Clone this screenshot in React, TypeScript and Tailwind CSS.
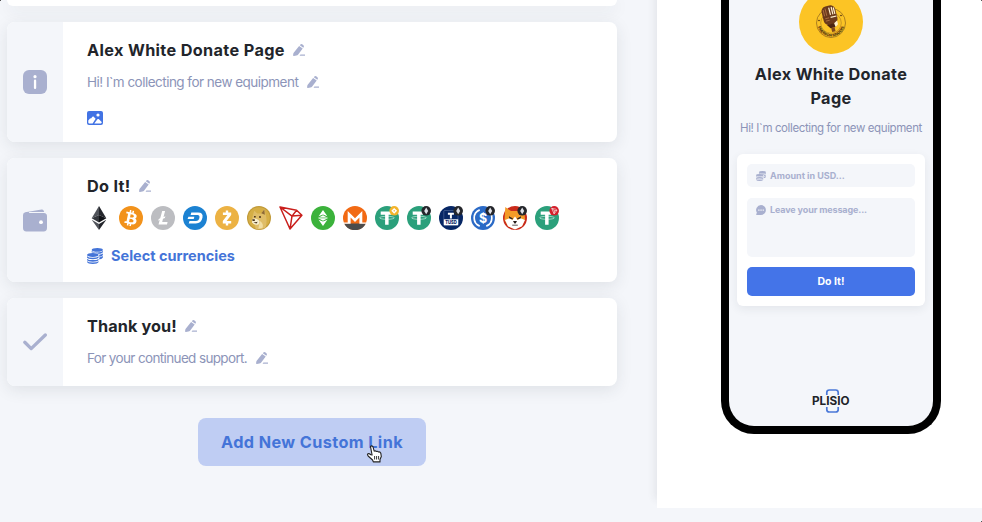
import type { ReactNode } from "react";
import { FaBtc } from "react-icons/fa";

const heading = "font-['Inter'] font-bold text-[16.25px] leading-6 text-[#22252b]";
const muted = "font-['Inter'] text-[#8c94b8]";

function Pencil() {
    return (
        <svg className="w-3 h-3 shrink-0" viewBox="0 0 12 12" fill="#a9b0cf">
            <path d="M6.1 2 9.7 4.6 5.2 10.6Q4.5 11.4 3.4 11.6L1 12Q0 12.1 .1 11.1L.4 9.3Q.5 8.8.9 8.4Z" />
            <path d="M6.8 1.2 7.4.6Q8.2-.3 9.2.3L10.4 1.2Q11.2 1.9 10.8 2.9L10.3 3.8Z" />
            <path d="M7.4 10.5h4.6v1.3H6.6Z" />
        </svg>
    );
}

function Coins({ className }: { className: string }) {
    return (
        <svg className={className} viewBox="0 0 16 16" fill="currentColor">
            <ellipse cx="10.3" cy="1.9" rx="5.6" ry="1.9" />
            <path d="M4.7 2.8Q6 4.4 10.3 4.4T15.9 2.8V3.9Q15.5 5.6 11.2 5.8 9 4.3 4.7 4.5Z" />
            <path d="M12.2 6.7Q14.8 6.4 15.9 5.4V6.9Q15.3 8.3 12.3 8.7Z" />
            <path d="M12.3 9.4Q14.8 9.1 15.9 8.1V9.6Q15.3 11 12.3 11.4Z" />
            <ellipse cx="5.8" cy="6.9" rx="5.8" ry="2" />
            <path d="M0 8.2Q1.5 9.7 5.8 9.7T11.6 8.2V9.6Q10.7 11.3 5.8 11.3T0 9.6Z" />
            <path d="M0 10.9Q1.5 12.1 5.8 12.1T11.6 10.9V12.1Q10.7 13.7 5.8 13.7T0 12.1Z" />
            <path d="M0 13.2Q1.5 14.4 5.8 14.4T11.6 13.2V14.1Q10.7 16 5.8 16T0 14.1Z" />
        </svg>
    );
}

function InfoIcon() {
    return (
        <svg className="w-6 h-6" viewBox="0 0 24 24">
            <rect width="24" height="24" rx="6" fill="#a9b0cf" />
            <circle cx="12" cy="6.7" r="1.6" fill="#fff" />
            <rect x="10.9" y="9.6" width="2.3" height="9.4" rx="1.1" fill="#fff" />
        </svg>
    );
}

function WalletIcon() {
    return (
        <svg className="w-6 h-6" viewBox="0 0 24 24" fill="#a9b0cf">
            <path d="M2.2 4.2 18.6 1.4Q20 1.2 20.6 2.6L21.2 4.1H6.4Q5 4.6 6.4 5.1H21Q24 5.4 24 8.2V20Q24 23.4 20.6 23.4H3.4Q0 23.4 0 20V7Q0 4.6 2.2 4.2Z" />
            <circle cx="18" cy="14.2" r="1.9" fill="#fff" />
        </svg>
    );
}

function CheckIcon() {
    return (
        <svg className="w-6 h-6" viewBox="0 0 24 24" fill="none" stroke="#a9b0cf" strokeWidth="3.3" strokeLinecap="round" strokeLinejoin="round">
            <path d="M1.8 12.3 8.2 18.6 22.3 5" />
        </svg>
    );
}

function PictureIcon() {
    return (
        <svg className="w-4 h-3.5" viewBox="0 0 16 14">
            <rect width="16" height="14" rx="2" fill="#4273e4" />
            <circle cx="11" cy="4" r="1.6" fill="#fff" />
            <path d="M1.3 11.6V9.6L3 7.5 4.3 7.3 5.3 5.8 6.5 5.6 8.6 7.8 5.6 12.4H2Q1.3 12.4 1.3 11.6Z" fill="#fff" />
            <path d="M7.3 12.4 10.6 8 11.7 8 14.7 10.9V11.6Q14.6 12.4 13.8 12.4Z" fill="#fff" />
        </svg>
    );
}

function Coin({ color, badge, children }: { color?: string; badge?: string; children: ReactNode }) {
    return (
        <svg className="w-6 h-6" viewBox="0 0 24 24">
            {color && <circle cx="12" cy="12" r="12" fill={color} />}
            {children}
            {badge && <circle cx="19.2" cy="4.8" r="4.8" fill={badge} />}
            {badge === "#24262b" && <path d="M19.2 1.4 21.2 5 19.2 8.2 17.2 5Z" fill="#dfe1e8" />}
            {badge === "#f3b42c" && (
                <path d="M19.2 1.9 22.1 4.8 19.2 7.7 16.3 4.8ZM19.2 3.9 18.3 4.8 19.2 5.7 20.1 4.8Z" fill="#fff" fillRule="evenodd" />
            )}
            {badge === "#d4202c" && <path d="M16.7 2.4 20.6 3.1 22 4.3 19.1 7.8ZM16.7 2.4 19.5 4.7 22 4.3M19.5 4.7 19.1 7.8" fill="none" stroke="#fff" strokeWidth=".6" />}
        </svg>
    );
}

function TetherMark() {
    return (
        <g fill="#fff">
            <path d="M5.7 5.6H17.6V8.8H13.6V18.8H10.1V8.8H5.7Z" />
            <ellipse cx="12" cy="11.8" rx="7.4" ry="1.5" fill="none" stroke="#fff" strokeOpacity=".75" strokeWidth=".7" />
        </g>
    );
}

function CurrencyRow() {
    return (
        <div className="flex gap-2">
            <Coin>
                <path d="M12 0 4.7 12.2 12 9Z" fill="#50535a" />
                <path d="M12 0 19.3 12.2 12 9Z" fill="#24262c" />
                <path d="M4.7 12.2 12 9V16.5Z" fill="#33363c" />
                <path d="M19.3 12.2 12 9V16.5Z" fill="#111317" />
                <path d="M4.7 13.8 12 18V24Z" fill="#50535a" />
                <path d="M19.3 13.8 12 18V24Z" fill="#24262c" />
            </Coin>
            <Coin color="#f2921b">
                <g transform="rotate(12 12 12)">
                    <FaBtc x="4.2" y="4.2" width="15.6" height="15.6" color="#fff" />
                </g>
            </Coin>
            <Coin color="#bcbdc1">
                <path d="M11.2 5H14.1L12.5 11 14.4 10.3 13.9 12 12 12.8 11.2 15.9H16.6L16 18.4H7.5L8.7 14.1 7.2 14.7 7.7 12.9 9.2 12.2Z" fill="#fff" />
            </Coin>
            <Coin color="#1c82d2">
                <path d="M8.3 6.5H15Q20.4 6.5 19.5 11.6 18.4 17.5 12.8 17.5H5.7L6.5 14.9H13Q15.7 14.9 16.4 11.9 16.9 9.1 14.5 9.1H7.6Z" fill="#fff" />
                <path d="M5.4 10.7H11.4L10.7 13H4.6Z" fill="#fff" />
            </Coin>
            <Coin color="#ecb244">
                <path d="M7.9 6.5H10.8V4.6H13.2V6.5H16.2V9L11.6 14.9H16.2V17.5H13.2V19.4H10.8V17.5H7.8V15L12.4 9.1H7.9Z" fill="#fff" />
            </Coin>
            <Coin color="#c19a38">
                <circle cx="12" cy="12" r="10.8" fill="#d5ae45" />
                <path d="M6 9 7.2 4.8 10.3 7.5 14.2 7.4 17.5 2.7 18.7 8.8Q20.5 14 18.6 21.5 14 24.4 8.6 22.7L8 19.6Q4.2 17 4.8 13.4Z" fill="#dfbd68" />
                <path d="M14.3 7.3 17.3 3.6 17.8 8.7Z" fill="#8e6a35" />
                <path d="M5 13.5Q7 11.8 10.5 13.4T11.4 18.4Q6.6 19.4 5.2 16.5Z" fill="#f8efcf" />
                <path d="M5.2 13.2h2.6v1.8H5.6ZM7 10.1h1.7v1.4H7ZM12 10.2h2v1.5h-2ZM6.3 16.6 10.7 15.7 9.5 17.4Z" fill="#4c351c" />
                <path d="M13 15Q17 18 15.5 22L11.3 22.8Z" fill="#f1dda2" />
            </Coin>
            <Coin>
                <path d="M1 1 17.6 4.3 22.9 9.2 11 23ZM1 1 13 10.1 22.9 9.2M13 10.1 17.6 4.3M13 10.1 11 23" fill="none" stroke="#c91f1c" strokeWidth="1.5" strokeLinejoin="round" />
            </Coin>
            <Coin color="#3bb23b">
                <path d="M12 4 16.4 10.2 12 8.6 7.6 10.2ZM12 20 7.6 13.8 12 15.4 16.4 13.8Z" fill="#fff" />
                <path d="M12 9.2 17 11.9 12 14.7 7 11.9Z" fill="#fff" />
                <path d="M8.2 11.9H15.8" stroke="#3bb23b" strokeWidth=".7" />
            </Coin>
            <Coin color="#f26a14">
                <path d="M1.2 17.4A12 12 0 0 0 22.8 17.4Z" fill="#4c4c4c" />
                <path d="M.1 16.5H4.7V5L12 12.3 19.3 5V16.5H23.9L22.8 17.8H16.4V11.5L12 15.9 7.6 11.5V17.8H1.2Z" fill="#fff" />
            </Coin>
            <Coin color="#2ba07b" badge="#f3b42c"><TetherMark /></Coin>
            <Coin color="#2ba07b" badge="#24262b"><TetherMark /></Coin>
            <Coin color="#072765" badge="#24262b">
                <rect x="4.8" y="4.5" width="14.2" height="14.5" rx="1" fill="none" stroke="#aebbd6" strokeOpacity=".6" strokeWidth=".5" />
                <path d="M8.9 6.8H14.9V8.8H12.9V12.4H10.9V8.8H8.9Z" fill="#fff" />
                <rect x="4.8" y="13.3" width="14.4" height="6" fill="#fff" />
                <text x="12" y="18" fontSize="4.6" fontWeight="800" fontFamily="Inter, sans-serif" textLength="11.6" lengthAdjust="spacingAndGlyphs" textAnchor="middle" fill="#072765">TUSD</text>
            </Coin>
            <Coin color="#2b6ac6" badge="#24262b">
                <path d="M8.7 3.9A8.7 8.7 0 0 0 8.7 20.1M15.3 3.9A8.7 8.7 0 0 1 15.3 20.1" fill="none" stroke="#fff" strokeWidth="1.7" />
                <text x="12" y="16.5" fontSize="12.5" fontWeight="700" fontFamily="Inter, sans-serif" textAnchor="middle" fill="#fff">$</text>
            </Coin>
            <Coin color="#c92b1b" badge="#24262b">
                <path d="M2.3 1 8 5.1H15.5L21 3 22 13 19 20 12 23.3 5 20.3 1.5 14Z" fill="#f39b27" />
                <path d="M2 14 6.4 12.2 9.5 14 12 10.5 14.5 14 17.6 12.2 22 14 19 20.3 12 23.4 5 20.3Z" fill="#fff" />
                <path d="M6 10.2 10 12.4 9.4 13.5 6.2 12.2ZM18 10.2 14 12.4 14.6 13.5 17.8 12.2ZM10 15H14L12.6 17.6H11.4ZM9.2 18.7H14.8V19.6H9.2Z" fill="#29201e" />
            </Coin>
            <Coin color="#2ba07b" badge="#d4202c"><TetherMark /></Coin>
        </div>
    );
}

function Card({ icon, className, children }: { icon: ReactNode; className: string; children: ReactNode }) {
    return (
        <section className={`flex w-[610px] shrink-0 overflow-hidden rounded-lg bg-white shadow-[0_4px_16px_rgba(40,45,60,0.1)] ${className}`}>
            <div className="flex w-14 shrink-0 items-center justify-center bg-[#f4f6fa]">{icon}</div>
            <div className="flex flex-col pl-6">{children}</div>
        </section>
    );
}

function Logo() {
    return (
        <svg className="w-10 h-6" viewBox="0 0 40 24">
            <path d="M15.8 6V3.5Q15.8 1 18.3 1H24.7Q27.2 1 27.2 3.5V6M15.8 18V20.5Q15.8 23 18.3 23H24.7Q27.2 23 27.2 20.5V18" fill="none" stroke="#4a78d8" strokeWidth="1.7" />
            <text x="1" y="16" fontSize="11.3" fontWeight="700" fontFamily="Inter, sans-serif" textLength="37.5" lengthAdjust="spacingAndGlyphs" fill="#202329">PLISIO</text>
        </svg>
    );
}

function Avatar() {
    return (
        <svg className="-mt-[10px] h-16 w-16 shrink-0" viewBox="0 0 64 64">
            <circle cx="32" cy="32" r="32" fill="#fcc425" />
            <circle cx="32" cy="33" r="14.5" fill="none" stroke="#8a611c" strokeWidth=".7" />
            <circle cx="32" cy="33" r="10.3" fill="none" stroke="#a87a22" strokeWidth=".6" />
            <path id="ring" d="M18.4 33A13.6 13.6 0 0 0 45.6 33" fill="none" />
            <text fontSize="3.6" fontWeight="800" fontFamily="Inter, sans-serif" fill="#4a2c0d">
                <textPath href="#ring" startOffset="50%" textAnchor="middle">EMERSON SINGERS</textPath>
            </text>
            <circle cx="20" cy="30.5" r=".8" fill="#4a2c0d" />
            <circle cx="42" cy="25.5" r=".8" fill="#4a2c0d" />
            <g transform="rotate(-14 31 25)">
                <rect x="23.5" y="15.5" width="14" height="19" rx="5" fill="#6b3a1c" />
                <path d="M31.5 17.5V25M34 17.5V25M36 18.5V25M31 27.5H37" stroke="#fff1cf" strokeWidth="1.2" />
                <path d="M25.5 18.5V25M27.7 17.5V25M25.5 27.5H29.5M25.5 30H29.5" stroke="#b17445" strokeWidth=".8" />
                <path d="M25.5 34H36L33.5 38H28.3Z" fill="#4b2512" />
                <path d="M29 38H32.5V42H29Z" fill="#80491f" />
                <path d="M33 34 36.5 32V36L33.5 38Z" fill="#fff1cf" />
            </g>
        </svg>
    );
}

function Phone() {
    return (
        <div className="ml-16 flex h-[434px] w-[220px] flex-col items-center rounded-b-[33px] border-x-8 border-b-8 border-black bg-[#f4f6fa]">
            <Avatar />
            <h2 className={`${heading} mt-2 w-full text-center tracking-[0.35px]`}>
                Alex White Donate
                <br />
                Page
            </h2>
            <p className={`${muted} mt-2 text-[11.5px] leading-5 whitespace-nowrap tracking-[-0.39px]`}>Hi! I`m collecting for new equipment</p>
            <div className="mt-4 flex h-[152px] w-[188px] shrink-0 flex-col rounded-md bg-white p-2.5 shadow-[0_3px_10px_rgba(40,45,60,0.08)]">
                <div className="flex h-[23px] items-center gap-1 rounded-[5px] bg-[#f4f6fa] pl-[9px] text-[#a9b0cf]">
                    <Coins className="h-2.5 w-2.5" />
                    <span className="font-['Inter'] text-[9px] leading-[14px] font-bold">Amount in USD...</span>
                </div>
                <div className="mt-[11px] flex h-[59px] items-start gap-1 rounded-[5px] bg-[#f4f6fa] pt-[5px] pl-[9px] text-[#a9b0cf]">
                    <svg className="mt-[1.5px] h-2.5 w-2.5" viewBox="0 0 10 10">
                        <path d="M5 .1A4.9 4.9 0 1 1 5 9.9H.5Q0 9.7.3 9L.9 7.7A4.9 4.9 0 0 1 5 .1Z" fill="currentColor" />
                        <path d="M2.2 4.4h1.3v1.3H2.2ZM4.4 4.4h1.3v1.3H4.4ZM6.6 4.4h1.3v1.3H6.6Z" fill="#f4f6fa" />
                    </svg>
                    <span className="font-['Inter'] text-[9px] leading-[14px] font-bold tracking-[-0.12px]">Leave your message...</span>
                </div>
                <button className="mt-2.5 h-[29px] rounded-[5px] bg-[#4474e8] font-['Inter'] text-[10.5px] font-bold text-white">Do It!</button>
            </div>
            <div className="mt-auto mb-[13px]">
                <Logo />
            </div>
        </div>
    );
}

function HandCursor() {
    return (
        <svg className="absolute top-[27px] left-[168px] h-[18px] w-[18px]" viewBox="0 0 18 18">
            <path d="M4.5 1.6Q5.6.2 6.9 1.6L8.2 6.1Q9.3 5.4 10.3 6.4 11.6 5.8 12.4 7 14.2 6.5 14.8 8.2L15.3 11.5 14 14.5V16.9H7.3L6.6 15 2.1 11Q.9 9.7 1.9 8.7 3.1 8.3 4.9 9.7L6.1 10Z" fill="#fff" stroke="#222" strokeWidth="1.1" strokeLinejoin="round" />
            <path d="M8.6 11V14.5M10.6 11V14.5M12.6 11V14.5" stroke="#222" strokeWidth=".9" />
        </svg>
    );
}

export default function App() {
    return (
        <div className="relative flex h-[522px] w-[982px] overflow-hidden bg-[#f4f6fa]">
            <main className="flex w-[657px] shrink-0 flex-col gap-4 pl-[7px]">
                <div className="h-1.5 w-[610px] shrink-0 rounded-b-lg bg-white shadow-[0_4px_16px_rgba(40,45,60,0.1)]" />
                <Card icon={<InfoIcon />} className="h-[120px]">
                    <div className="mt-4 flex items-center gap-2">
                        <h2 className={`${heading} tracking-[0.35px]`}>Alex White Donate Page</h2>
                        <Pencil />
                    </div>
                    <div className="mt-2 flex items-center gap-[9px]">
                        <p className={`${muted} text-[13.5px] leading-6 tracking-[-0.52px]`}>Hi! I`m collecting for new equipment</p>
                        <Pencil />
                    </div>
                    <div className="mt-[17px]">
                        <PictureIcon />
                    </div>
                </Card>
                <Card icon={<WalletIcon />} className="h-[124px]">
                    <div className="mt-4 flex items-center gap-2">
                        <h2 className={`${heading} tracking-[0.3px]`}>Do It!</h2>
                        <Pencil />
                    </div>
                    <div className="mt-2">
                        <CurrencyRow />
                    </div>
                    <div className="mt-3.5 flex items-center gap-2 text-[#4474d8]">
                        <Coins className="h-4 w-4" />
                        <span className="font-['Inter'] text-[14.5px] leading-6 font-bold">Select currencies</span>
                    </div>
                </Card>
                <Card icon={<CheckIcon />} className="h-[88px]">
                    <div className="mt-4 flex items-center gap-2">
                        <h2 className={`${heading} tracking-[0.1px]`}>Thank you!</h2>
                        <Pencil />
                    </div>
                    <div className="mt-2 flex items-center gap-[9px]">
                        <p className={`${muted} text-[13.5px] leading-6 tracking-[-0.64px]`}>For your continued support.</p>
                        <Pencil />
                    </div>
                </Card>
                <button className="relative mt-4 ml-[191px] h-12 w-[228px] shrink-0 rounded-lg bg-[#bfcdf3] font-['Inter'] text-[16.25px] font-bold tracking-[0.4px] text-[#4474d8]">
                    Add New Custom Link
                    <HandCursor />
                </button>
            </main>
            <aside className="h-[508px] w-[325px] bg-white shadow-[-2px_-8px_8px_rgba(40,45,60,0.09)]">
                <Phone />
            </aside>
            {/* window corners */}
            <span className="absolute top-0 left-0 h-px w-px bg-[#555]" />
            <span className="absolute top-0 right-0 h-px w-px bg-[#555]" />
            <span className="absolute right-0 bottom-0 h-px w-px bg-[#555]" />
        </div>
    );
}
